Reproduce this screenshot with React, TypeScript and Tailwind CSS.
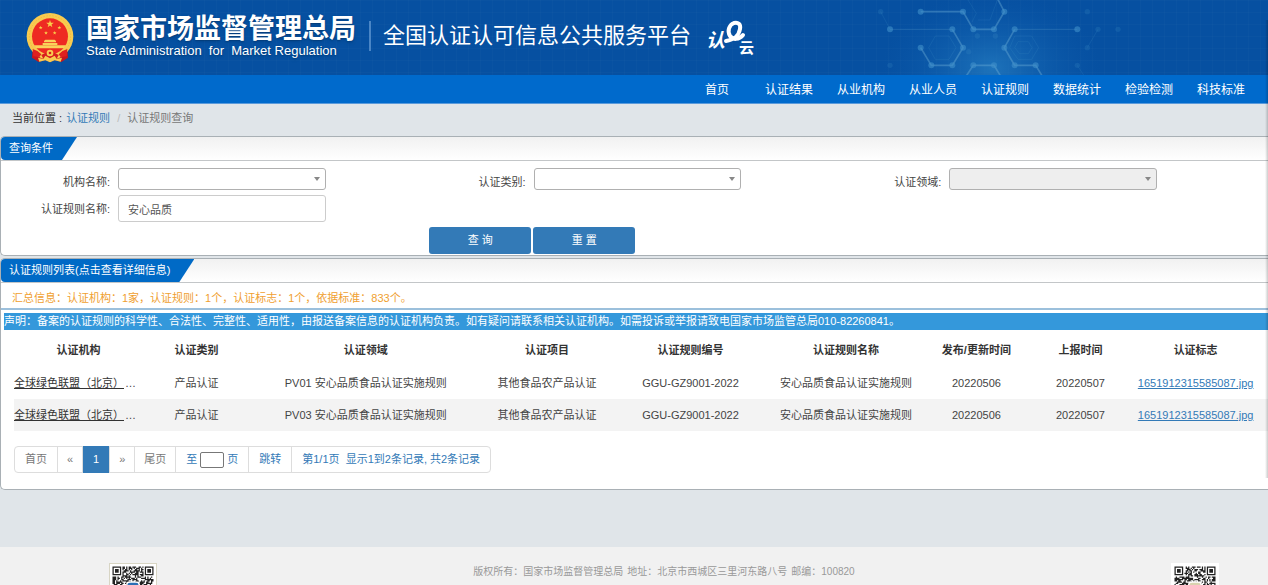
import type { ReactNode } from "react"
import { clsx } from "clsx"

const navItems = ["首页", "认证结果", "从业机构", "从业人员", "认证规则", "数据统计", "检验检测", "科技标准"]

const columns = [
  { title: "认证机构", width: "w-[10.3%]" },
  { title: "认证类别", width: "w-[8.5%]" },
  { title: "认证领域", width: "w-[18.5%]" },
  { title: "认证项目", width: "w-[10.4%]" },
  { title: "认证规则编号", width: "w-[12.5%]" },
  { title: "认证规则名称", width: "w-[12.3%]" },
  { title: "发布/更新时间", width: "w-[8.5%]" },
  { title: "上报时间", width: "w-[8.1%]" },
  { title: "认证标志", width: "w-[10.9%]" },
]

const rows = ["PV01", "PV03"].map((code) => ({
  org: "全球绿色联盟（北京）食品安全认证中心",
  category: "产品认证",
  field: `${code} 安心品质食品认证实施规则`,
  project: "其他食品农产品认证",
  number: "GGU-GZ9001-2022",
  name: "安心品质食品认证实施规则",
  updated: "20220506",
  reported: "20220507",
  mark: "1651912315585087.jpg",
}))

function Star({ x, y, r }: { x: number; y: number; r: number }) {
  const points = Array.from({ length: 10 }, (_, i) => {
    const radius = i % 2 ? r * 0.4 : r
    const angle = (Math.PI / 5) * i - Math.PI / 2
    return `${x + radius * Math.cos(angle)},${y + radius * Math.sin(angle)}`
  }).join(" ")
  return <polygon points={points} fill="#f9cf4a" />
}

function Emblem() {
  return (
    <svg viewBox="0 0 144 150" className="h-[50px] w-12 shrink-0" aria-hidden="true">
      <path d="M20 104 L18 134 L38 147 L58 141 L72 147 L86 141 L106 147 L126 134 L124 104Z" fill="#c9161d" />
      <circle cx="72" cy="70" r="70" fill="#f8cb50" />
      <circle cx="72" cy="70" r="62" fill="none" stroke="#efb53b" strokeWidth="2" strokeDasharray="5 4" />
      <circle cx="72" cy="70" r="54" fill="#ee2a22" />
      <Star x={72} y={33} r={12} />
      <Star x={44} y={44} r={6} />
      <Star x={100} y={44} r={6} />
      <Star x={60} y={60} r={6} />
      <Star x={86} y={60} r={6} />
      <path d="M54 84 L58 80 H86 L90 84 V88 H54Z M50 90 H94 V96 H50Z M24 97 H120 L114 106 H30Z" fill="#f9d25a" />
      <path d="M20 108 Q36 112 46 124 L40 132 L22 130Z M124 108 Q108 112 98 124 L104 132 L122 130Z" fill="#e0211f" />
      <path d="M46 126 Q72 108 98 126 L90 140 H54Z" fill="#d81e1e" />
      <path d="M36 134 L52 138 L58 128 L72 136 L86 128 L92 138 L108 134 L104 146 L86 142 L72 148 L58 142 L40 146Z" fill="#f8cb50" />
      <circle cx="72" cy="120" r="10" fill="#f8cb50" />
      <circle cx="72" cy="120" r="4" fill="#d81e1e" />
    </svg>
  )
}

function CloudLogo() {
  return (
    <svg viewBox="0 0 54 44" className="ml-3 h-11 w-[54px] shrink-0" role="img" aria-label="认e云">
      <g fill="#fff" fontFamily="'Liberation Sans', 'Noto Sans CJK SC', sans-serif" fontWeight="700">
        <text x="3" y="31" fontSize="19" fontStyle="italic">认</text>
        <text x="36" y="37" fontSize="15">云</text>
      </g>
      <path d="M23 25C31 24 36 19 37 13C38 8 35 6 31 7C26 9 24 15 27 20C30 24 36 24 40 19" fill="none" stroke="#fff" strokeWidth="4" strokeLinecap="round" />
    </svg>
  )
}

function HeaderArt() {
  const dots = [
    [158, 35], [285, 35], [409, 35], [316, 88], [378, 88], [440, 88], [628, 88], [66, 88], [253, 88],
    [158, 143], [285, 143], [409, 143], [190, 196], [253, 196], [316, 196], [378, 196], [440, 196], [503, 196],
  ]
  const faintDots = [[38, 35], [66, 196], [628, 196], [658, 35], [658, 143], [690, 88], [750, 88], [328, 108], [382, 108], [302, 155]]
  return (
    <svg viewBox="0 0 1200 225" className="pointer-events-none absolute top-0 right-0 h-[75px] w-[400px]" aria-hidden="true">
      <defs>
        <radialGradient id="glow">
          <stop offset="0" stopColor="#2b86c8" stopOpacity=".65" />
          <stop offset="1" stopColor="#0b5cb0" stopOpacity="0" />
        </radialGradient>
      </defs>
      <ellipse cx="370" cy="205" rx="330" ry="230" fill="url(#glow)" />
      <g fill="none" stroke="#6fb0d8" strokeOpacity=".4" strokeWidth="5">
        <path d="M158 35H285L316 88H378L409 35L388 -5" />
        <path d="M253 88L285 143L253 196H190L158 143" />
        <path d="M530 240L503 196H440L409 143L440 88" />
        <path d="M290 235L316 196H378L402 235" />
        <path d="M66 88H253M440 88H628" strokeOpacity=".25" strokeWidth="3" />
      </g>
      <g fill="none" stroke="#58a9d8" strokeOpacity=".12" strokeWidth="3">
        <path d="M202 108H243L264 143L243 178H202L182 143Z M440 108H491L512 143L491 178H450L425 143Z" />
        <path d="M450 125H481L492 143L481 161H455L440 143Z M38 35L66 88M628 196L650 230M658 143L690 88" />
        <path d="M300 0L325 40L312 66M388 0L366 60H330" />
      </g>
      {dots.map(([x, y]) => <circle key={`${x}-${y}`} cx={x} cy={y} r="9" fill="#3f8fc9" fillOpacity=".6" />)}
      {faintDots.map(([x, y]) => <circle key={`${x}-${y}`} cx={x} cy={y} r="8" fill="#3f8fc9" fillOpacity=".2" />)}
    </svg>
  )
}

const QR_SIZE = 33

function qrModule(x: number, y: number, seed: number) {
  // finder patterns in three corners
  for (const [fx, fy] of [[0, 0], [QR_SIZE - 7, 0], [0, QR_SIZE - 7]]) {
    const dx = x - fx
    const dy = y - fy
    if (dx >= -1 && dx <= 7 && dy >= -1 && dy <= 7) {
      const ring = Math.max(Math.abs(dx - 3), Math.abs(dy - 3))
      return ring === 3 || ring <= 1
    }
  }
  const n = Math.sin(x * 12.9898 + y * 78.233 + seed) * 43758.5453
  return n - Math.floor(n) > 0.46
}

function QrCode({ seed, label, badge, className }: { seed: number; label: string; badge: string; className: string }) {
  let d = ""
  for (let y = 0; y < QR_SIZE; y++) {
    for (let x = 0; x < QR_SIZE; x++) {
      if (qrModule(x, y, seed)) d += `M${x} ${y}h1v1h-1z`
    }
  }
  return (
    <svg viewBox="-2 -2 37 37" className={clsx("size-12 shrink-0 border bg-white", className)} role="img" aria-label={label}>
      <path d={d} fill="#222" />
      <rect x="11" y="12" width="11" height="10" rx="2" fill="#fff" />
      <rect x="12" y="13" width="9" height="8" rx="2" fill={badge} />
    </svg>
  )
}

function Panel({ title, children }: { title: string; children: ReactNode }) {
  return (
    <section className="rounded-l-[5px] border-y border-l border-[#a9b0b5] bg-white">
      <div className="h-6 rounded-tl border-b border-[#c3c6c8] bg-linear-to-b from-[#f1f1f1] to-white">
        <h2 className="h-[23px] w-fit rounded-l bg-[#006ac6] pr-6 pl-2 text-[11px] leading-[23px] text-white [clip-path:polygon(0_0,100%_0,calc(100%-15px)_100%,0_100%)]">
          {title}
        </h2>
      </div>
      {children}
    </section>
  )
}

function SelectField({ id, label, disabled }: { id: string; label: string; disabled?: boolean }) {
  return (
    <div className="flex items-start">
      <label htmlFor={id} className="mr-2 w-[109px] pt-1.5 text-right leading-4">{label}</label>
      <div className="relative w-1/2">
        <select
          id={id}
          disabled={disabled}
          className={clsx("block h-[22px] w-full appearance-none rounded-[3px] border border-[#b0b0b0]", disabled ? "bg-[#eee]" : "bg-white")}
        >
          <option value="" />
        </select>
        <svg viewBox="0 0 8 5" className="pointer-events-none absolute top-[9px] right-[5px] h-[5px] w-2" aria-hidden="true">
          <path d="M1 0h6L4 4z" fill="#888" />
        </svg>
      </div>
    </div>
  )
}

function Pager() {
  return (
    <nav aria-label="分页" className="mt-[15px] ml-[13px] flex w-fit divide-x divide-[#ddd] rounded border border-[#ddd] leading-[25px] text-[#337ab7]">
      <button className="px-[10px] text-[#777]">首页</button>
      <button className="px-[9px] text-[#777]">«</button>
      <button className="-my-px w-[27px] bg-[#337ab7] text-white" aria-current="page">1</button>
      <button className="px-[9px] text-[#777]">»</button>
      <button className="px-[9px] text-[#777]">尾页</button>
      <label className="flex items-center px-[10px]">
        至
        <input type="text" className="mx-[3px] h-4 w-6 rounded-[2px] border border-[#777] bg-white px-0.5" />
        页
      </label>
      <button className="px-[10px]">跳转</button>
      <span className="px-[10px] whitespace-pre">第1/1页  显示1到2条记录, 共2条记录</span>
    </nav>
  )
}

export default function App() {
  return (
    <div className="relative flex h-screen flex-col overflow-hidden bg-[#e0e5e9] font-['Liberation_Sans','Noto_Sans_CJK_SC',sans-serif] text-[11px] text-[#444]">
      <header className="relative shrink-0 bg-[#0650a1]">
        <div className="flex h-[75px] items-center bg-[linear-gradient(90deg,rgba(255,255,255,.015)_1px,transparent_1px),linear-gradient(rgba(255,255,255,.015)_1px,transparent_1px)] bg-[length:12px_12px] pl-[26px] text-white">
          <Emblem />
          <div className="ml-3 pb-1 text-shadow-md">
            <div className="text-[27px] leading-[30px] font-bold">国家市场监督管理总局</div>
            <div className="text-[13px] leading-[14px] whitespace-pre">State Administration  for  Market Regulation</div>
          </div>
          <div className="mb-1 ml-[13px] h-[30px] w-0.5 bg-[#4a86c6]" />
          <h1 className="ml-3 pb-1 text-[22px] leading-8">全国认证认可信息公共服务平台</h1>
          <CloudLogo />
        </div>
        <HeaderArt />
      </header>
      <nav className="flex shrink-0 justify-end border-b border-[#5b9bdb] bg-[#006acc] pt-0.5 pr-[11px] text-xs leading-[26px] text-white">
        {navItems.map((item) => (
          <a key={item} href="#" className="w-[72px] text-center">{item}</a>
        ))}
      </nav>

      <div className="flex h-8 shrink-0 items-center pb-1 pl-3">
        <span className="text-[#333]">当前位置 :</span>
        <a href="#" className="ml-1 text-[#337ab7]">认证规则</a>
        <span className="mx-[7px] text-[#bbb]">/</span>
        <span className="text-[#777]">认证规则查询</span>
      </div>

      <main className="flex shrink-0 flex-col gap-0.5">
        <Panel title="查询条件">
          <form className="pt-[7px] pb-px" onSubmit={(e) => e.preventDefault()}>
            <div className="grid grid-cols-3 gap-y-[5px] pr-5">
              <SelectField id="org" label="机构名称:" />
              <SelectField id="category" label="认证类别:" />
              <SelectField id="field" label="认证领域:" disabled />
              <div className="flex items-center">
                <label htmlFor="rule" className="mr-2 w-[109px] pt-0.5 text-right">认证规则名称:</label>
                <input
                  id="rule"
                  type="text"
                  defaultValue="安心品质"
                  className="h-[27px] w-1/2 rounded-[3px] border border-[#ccc] bg-white px-[9px] text-[#555]"
                />
              </div>
            </div>
            <div className="mt-[5px] flex gap-0.5 pl-[33.8%] text-white">
              <button type="submit" className="h-[27px] w-[102px] rounded-[3px] bg-[#337ab7]">查 询</button>
              <button type="reset" className="h-[27px] w-[102px] rounded-[3px] bg-[#337ab7]">重 置</button>
            </div>
          </form>
        </Panel>

        <Panel title="认证规则列表(点击查看详细信息)">
          <div className="pb-4">
            <p className="border-b-2 border-[#9cc0dc] pt-[7px] pb-0.5 pl-[11px] leading-4 text-[#f0a030]">
              汇总信息：认证机构：1家，认证规则：1个，认证标志：1个，依据标准：833个。
            </p>
            <p className="mt-[3px] ml-[3px] bg-[#3498db] leading-[17px] text-white">
              声明：备案的认证规则的科学性、合法性、完整性、适用性，由报送备案信息的认证机构负责。如有疑问请联系相关认证机构。如需投诉或举报请致电国家市场监管总局010-82260841。
            </p>
            <div className="mt-[3px] pl-[13px]">
              <table className="w-full table-fixed text-center">
                <thead>
                  <tr className="h-[34px] text-[#333]">
                    {columns.map((col) => (
                      <th key={col.title} className={clsx("font-bold last:pr-2", col.width)}>{col.title}</th>
                    ))}
                  </tr>
                </thead>
                <tbody>
                  {rows.map((row) => (
                    <tr key={row.field} className="h-8 even:bg-[#f3f3f3]">
                      <td className="text-left">
                        <div className="flex">
                          <a href="#" className="w-[111px] overflow-hidden whitespace-nowrap text-[#333] underline">{row.org.slice(0, 10)}</a>
                          <span>…</span>
                        </div>
                      </td>
                      <td>{row.category}</td>
                      <td>{row.field}</td>
                      <td>{row.project}</td>
                      <td>{row.number}</td>
                      <td>{row.name}</td>
                      <td>{row.updated}</td>
                      <td>{row.reported}</td>
                      <td className="pr-2">
                        <a href="#" className="text-[#337ab7] underline">{row.mark}</a>
                      </td>
                    </tr>
                  ))}
                </tbody>
              </table>
            </div>
            <Pager />
          </div>
        </Panel>
      </main>

      <footer className="mt-[57px] flex shrink-0 items-start justify-between bg-[#f1f1f1] pt-4 pr-[49px] pb-4 pl-[109px] text-[10px] text-[#999]">
        <QrCode seed={3} label="公众号二维码" badge="#2b6fb5" className="border-[#d8d5c4]" />
        <p className="flex gap-1 leading-[18px]">
          <span>版权所有：国家市场监督管理总局</span>
          <span>地址：北京市西城区三里河东路八号</span>
          <span>邮编：100820</span>
        </p>
        <QrCode seed={8} label="客户端二维码" badge="#d9d3b0" className="border-white" />
      </footer>

      <div className="pointer-events-none absolute top-5 right-0 h-[458px] w-[3px] bg-linear-to-r from-transparent to-black/20" />
    </div>
  )
}
